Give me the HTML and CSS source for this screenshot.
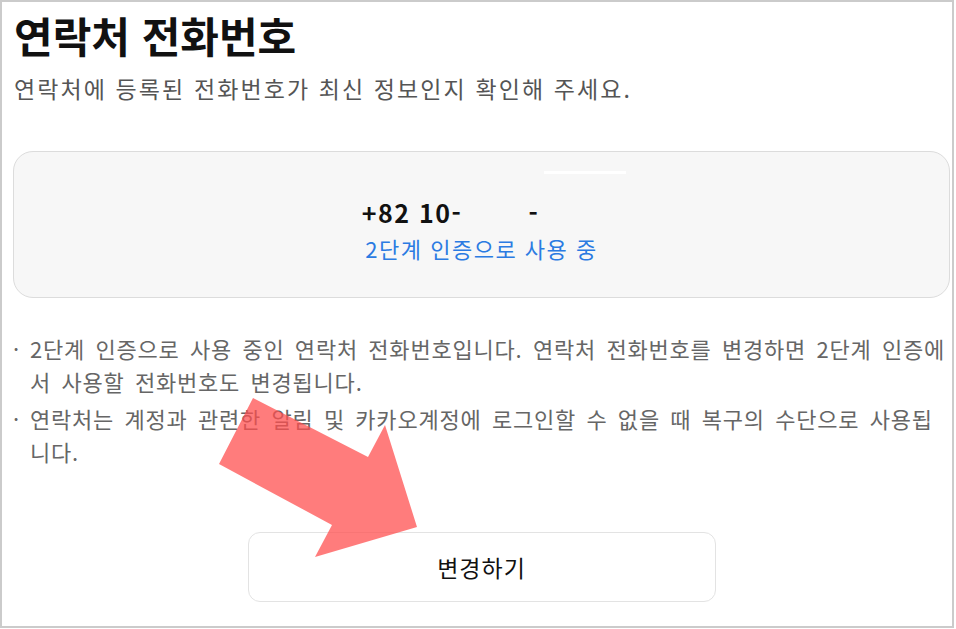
FILE: index.html
```html
<!DOCTYPE html>
<html lang="ko">
<head>
  <meta charset="UTF-8">
  <title>연락처 전화번호</title>
  <link rel="stylesheet" href="styles.css">
</head>
<body>
<div class="frame">
  <h1>연락처 전화번호</h1>
  <p class="desc">연락처에 등록된 전화번호가 최신 정보인지 확인해 주세요.</p>

  <div class="phone-card">
    <div class="mask-bar"></div>
    <div class="phone-number">+82 10-<span class="masked mid"></span>-<span class="masked end"></span></div>
    <div class="phone-status">2단계 인증으로 사용 중</div>
  </div>

  <ul class="notice">
    <li><span class="dot">·</span><span>2단계 인증으로 사용 중인 연락처 전화번호입니다. 연락처 전화번호를 변경하면 2단계 인증에서 사용할 전화번호도 변경됩니다.</span></li>
    <li><span class="dot">·</span><span>연락처는 계정과 관련한 알림 및 카카오계정에 로그인할 수 없을 때 복구의 수단으로 사용됩니다.</span></li>
  </ul>

  <div class="actions">
    <button class="change-btn" type="button">변경하기</button>
  </div>

  <svg class="arrow" width="220" height="175" viewBox="0 0 220 175">
    <polygon points="43,8 9,74 122,135 105,167 207,137 175,35 158,67" />
  </svg>
</div>
</body>
</html>
```

FILE: styles.css
```css
body {
  margin: 0;
  background: #fff;
  font-family: "Noto Sans CJK KR", "Noto Sans", sans-serif;
}

.frame {
  position: relative;
  box-sizing: border-box;
  width: 954px;
  height: 628px;
  border: 2px solid #cbcbcb;
  padding: 9px 2px 0 11px;
}

h1 {
  margin: 0 0 0 1px;
  font-size: 42px;
  line-height: 48px;
  font-weight: bold;
  color: #111;
}

.desc {
  margin: 13px 0 0 1px;
  font-size: 23px;
  line-height: 32px;
  letter-spacing: 2.1px;
  color: #555;
}

.phone-card {
  margin-top: 47px;
  background: #f7f7f7;
  border: 1px solid #dcdcdc;
  border-radius: 20px;
  padding: 19px 0 33px;
  text-align: center;
}

.mask-bar {
  width: 82px;
  height: 3px;
  background: #fff;
  margin: 0 0 22px 530px;
}

.phone-number {
  font-size: 25px;
  line-height: 32px;
  font-weight: bold;
  letter-spacing: 1.5px;
  color: #111;
}

.masked {
  display: inline-block;
}

.masked.mid {
  width: 66px;
}

.masked.end {
  width: 62px;
}

.phone-status {
  margin-top: 4px;
  font-size: 22px;
  line-height: 32px;
  letter-spacing: 1.5px;
  color: #2b7be2;
}

.notice {
  list-style: none;
  margin: 34px 4px 0 0;
  padding: 0;
  font-size: 22px;
  line-height: 32.5px;
  letter-spacing: 0.8px;
  word-spacing: 3.4px;
  color: #666;
}

.notice li {
  display: flex;
}

.notice li + li {
  margin-top: 5px;
}

.dot {
  flex: 0 0 17px;
  letter-spacing: 0;
}

.actions {
  margin-top: 65px;
  display: flex;
  justify-content: center;
}

.change-btn {
  width: 468px;
  height: 70px;
  background: #fff;
  border: 1px solid #e3e3e3;
  border-radius: 12px;
  font-family: inherit;
  font-size: 23px;
  letter-spacing: 1px;
  color: #111;
}

.arrow {
  position: absolute;
  left: 208px;
  top: 388px;
}

.arrow polygon {
  fill: rgba(255, 78, 78, 0.74);
}
```
